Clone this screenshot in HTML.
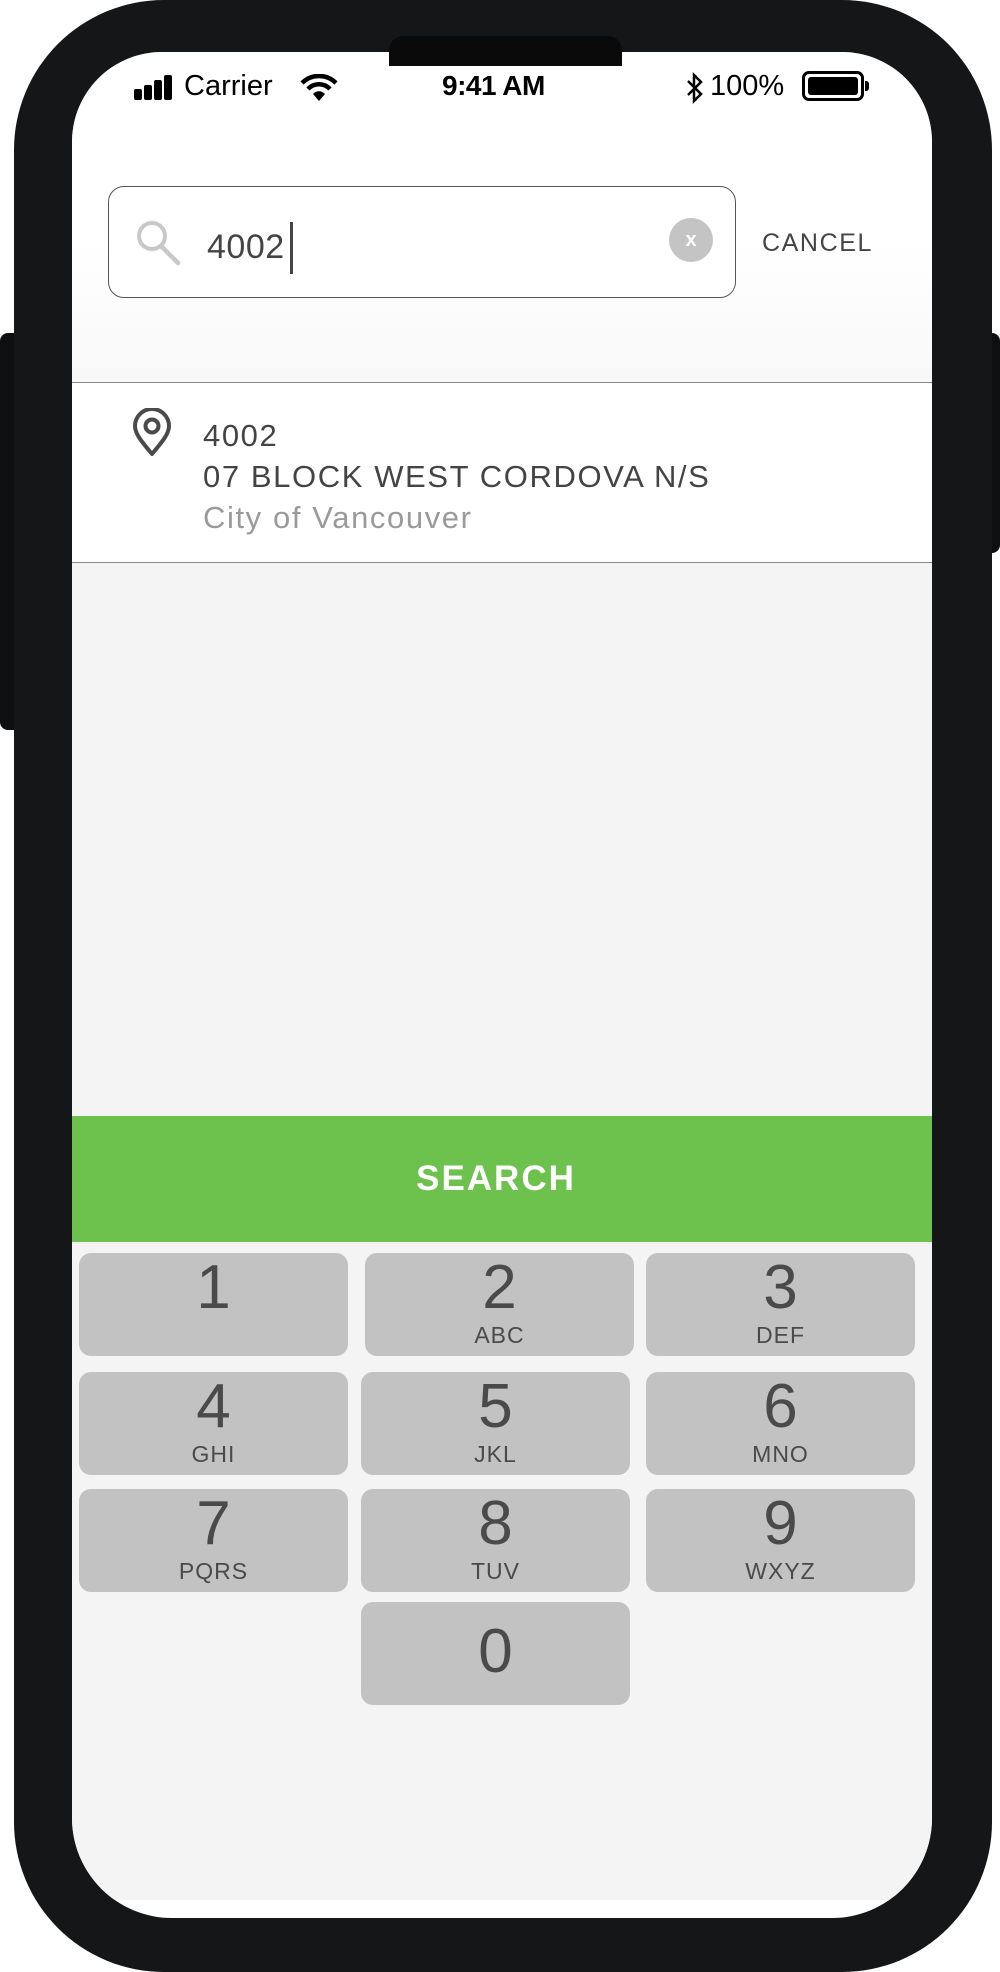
<!DOCTYPE html>
<html><head><meta charset="utf-8">
<style>
*{margin:0;padding:0;box-sizing:border-box}
html,body{width:1000px;height:1972px;background:#fff;overflow:hidden;font-family:"Liberation Sans",sans-serif}
.phone{position:absolute;left:14px;top:0;width:978px;height:1972px;background:#151618;border-radius:150px}
.btnl{position:absolute;left:0;top:333px;width:20px;height:397px;background:#0e0f10;border-radius:8px 0 0 8px}
.btnr{position:absolute;left:985px;top:333px;width:15px;height:220px;background:#0e0f10;border-radius:0 8px 8px 0}
.notch{position:absolute;left:389px;top:36px;width:233px;height:30px;background:#0a0a0b;border-radius:14px 14px 0 0}
.screen{position:absolute;left:72px;top:52px;width:860px;height:1866px;background:#fff;border-radius:90px 90px 100px 100px;overflow:hidden}
.abs{position:absolute}
.sb{font-size:29px;color:#000;top:18px}
.key{position:absolute;width:269px;height:103px;background:#c2c2c2;border-radius:12px;text-align:center;color:#4a4a4a}
.key .d{position:absolute;left:0;right:0;top:3px;font-size:62px;line-height:64px}
.key .l{position:absolute;left:0;right:0;top:69px;font-size:23px;line-height:26px;letter-spacing:1px}
</style></head><body>
<div class="btnl"></div><div class="btnr"></div>
<div class="phone"></div>
<div class="screen">
  <div class="abs" style="left:0;top:0;width:860px;height:330px;background:linear-gradient(#fff 0,#fff 190px,#f8f8f8 330px)"></div>
  <div class="abs" style="left:0;top:330px;width:860px;height:1518px;background:#f4f4f4"></div>
  <svg class="abs" style="left:62px;top:23px" width="40" height="26"><rect x="0" y="14" width="8" height="11" rx="2"/><rect x="10" y="10" width="8" height="15" rx="2"/><rect x="20" y="5" width="8" height="20" rx="2"/><rect x="30" y="0" width="8" height="25" rx="2"/></svg>
  <div class="abs sb" style="left:112px">Carrier</div>
  <svg class="abs" style="left:228px;top:22px" width="38" height="28" viewBox="0 0 38 28"><path d="M2 9 A24 24 0 0 1 36 9" fill="none" stroke="#000" stroke-width="4.5"/><path d="M8 15 A15 15 0 0 1 30 15" fill="none" stroke="#000" stroke-width="4.5"/><path d="M13 20 L19 27 L25 20 A8 8 0 0 0 13 20Z"/></svg>
  <div class="abs sb" style="left:370px;font-weight:bold;font-size:28px;letter-spacing:-0.5px">9:41 AM</div>
  <svg class="abs" style="left:612px;top:20px" width="22" height="32" viewBox="0 0 22 32"><path d="M4 9 L17 22 L10 29 L10 3 L17 10 L4 23" fill="none" stroke="#000" stroke-width="2.5"/></svg>
  <div class="abs sb" style="left:638px">100%</div>
  <div class="abs" style="left:730px;top:19px;width:62px;height:30px;border:3px solid #000;border-radius:7px;padding:3px"><div style="width:100%;height:100%;background:#000;border-radius:3px"></div></div>
  <div class="abs" style="left:793px;top:29px;width:4px;height:10px;background:#000;border-radius:0 3px 3px 0"></div>
  <div class="abs" style="left:36px;top:134px;width:628px;height:112px;border:1.5px solid #555;border-radius:16px;background:#fff"></div>
  <svg class="abs" style="left:62px;top:168px" width="50" height="50" viewBox="0 0 50 50"><circle cx="18" cy="16" r="13" fill="none" stroke="#c8c8c8" stroke-width="4"/><path d="M27 26 L44 43" stroke="#c8c8c8" stroke-width="4.5" stroke-linecap="round"/></svg>
  <div class="abs" style="left:135px;top:176px;font-size:34px;color:#444;letter-spacing:0.5px">4002</div>
  <div class="abs" style="left:218px;top:170px;width:3px;height:52px;background:#444"></div>
  <div class="abs" style="left:597px;top:166px;width:44px;height:44px;border-radius:50%;background:#c4c4c4;color:#fff;font-size:20px;font-weight:bold;text-align:center;line-height:44px">x</div>
  <div class="abs" style="left:690px;top:177px;font-size:25px;color:#444;letter-spacing:1.6px">CANCEL</div>
  <div class="abs" style="left:0;top:330px;width:860px;height:181px;background:#fff;border-top:1.5px solid #888;border-bottom:1.5px solid #888"></div>
  <svg class="abs" style="left:60px;top:356px" width="42" height="50" viewBox="0 0 42 50"><path d="M20 46 C10 34 3 26 3 18 A17 17 0 0 1 37 18 C37 26 30 34 20 46Z" fill="none" stroke="#4a4a4a" stroke-width="4" stroke-linejoin="round"/><circle cx="20" cy="18" r="6.5" fill="none" stroke="#4a4a4a" stroke-width="4"/></svg>
  <div class="abs" style="left:131px;top:363px;font-size:31px;color:#444;line-height:41px;letter-spacing:1.6px">4002<br>07 BLOCK WEST CORDOVA N/S<br><span style="color:#9a9a9a">City of Vancouver</span></div>
  <div class="abs" style="left:0;top:1064px;width:848px;height:126px;background:transparent;color:#fff;font-weight:bold;font-size:35px;letter-spacing:2px;text-align:center;line-height:126px;z-index:2">SEARCH</div>
  <div class="abs" style="left:0;top:1064px;width:860px;height:126px;background:#6cc24c"></div>
  <div class="key" style="left:7px;top:1201px"><div class="d">1</div></div>
  <div class="key" style="left:293px;top:1201px"><div class="d">2</div><div class="l">ABC</div></div>
  <div class="key" style="left:574px;top:1201px"><div class="d">3</div><div class="l">DEF</div></div>
  <div class="key" style="left:7px;top:1320px"><div class="d">4</div><div class="l">GHI</div></div>
  <div class="key" style="left:289px;top:1320px"><div class="d">5</div><div class="l">JKL</div></div>
  <div class="key" style="left:574px;top:1320px"><div class="d">6</div><div class="l">MNO</div></div>
  <div class="key" style="left:7px;top:1437px"><div class="d">7</div><div class="l">PQRS</div></div>
  <div class="key" style="left:289px;top:1437px"><div class="d">8</div><div class="l">TUV</div></div>
  <div class="key" style="left:574px;top:1437px"><div class="d">9</div><div class="l">WXYZ</div></div>
  <div class="key" style="left:289px;top:1550px"><div class="d" style="top:18px">0</div></div>
</div>
<div class="notch"></div>
</body></html>
